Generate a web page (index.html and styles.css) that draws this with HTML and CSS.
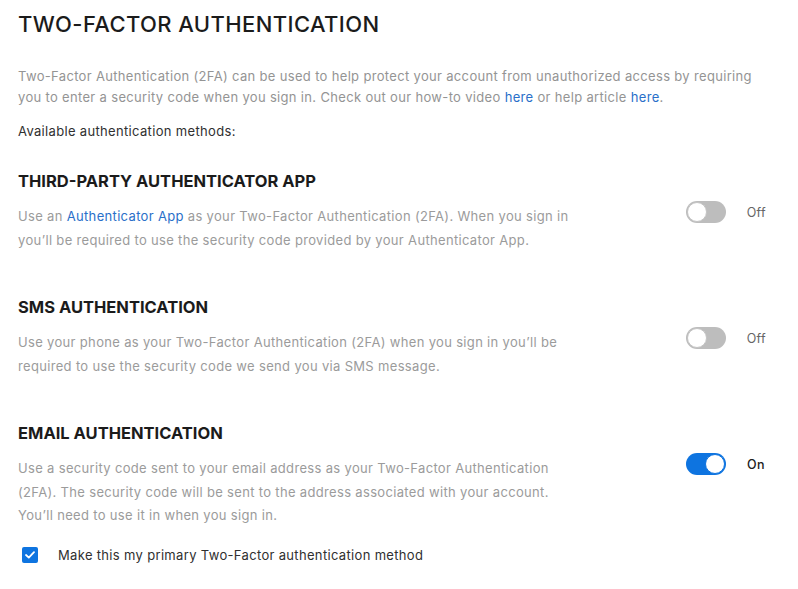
FILE: index.html
```html
<!DOCTYPE html>
<html lang="en">
<head>
    <meta charset="UTF-8">
    <meta name="viewport" content="width=device-width, initial-scale=1.0">
    <title>Two-Factor Authentication</title>
    <link rel="stylesheet" href="styles.css">
</head>
<body>
    <main class="page">
        <h1 class="page-title">TWO-FACTOR AUTHENTICATION</h1>
        <p class="intro">Two-Factor Authentication (2FA) can be used to help protect your account from unauthorized access by requiring you to enter a security code when you sign in. Check out our how-to video <a href="#">here</a> or help article <a href="#">here</a>.</p>
        <p class="available">Available authentication methods:</p>

        <section class="method">
            <h2>THIRD-PARTY AUTHENTICATOR APP</h2>
            <div class="method-row">
                <p class="method-desc">Use an <a href="#">Authenticator App</a> as your Two-Factor Authentication (2FA). When you sign in you’ll be required to use the security code provided by your Authenticator App.</p>
                <label class="switch">
                    <span class="track"><span class="knob"></span></span>
                    <span class="switch-label">Off</span>
                </label>
            </div>
        </section>

        <section class="method">
            <h2>SMS AUTHENTICATION</h2>
            <div class="method-row">
                <p class="method-desc">Use your phone as your Two-Factor Authentication (2FA) when you sign in you’ll be required to use the security code we send you via SMS message.</p>
                <label class="switch">
                    <span class="track"><span class="knob"></span></span>
                    <span class="switch-label">Off</span>
                </label>
            </div>
        </section>

        <section class="method">
            <h2>EMAIL AUTHENTICATION</h2>
            <div class="method-row">
                <p class="method-desc">Use a security code sent to your email address as your Two-Factor Authentication (2FA). The security code will be sent to the address associated with your account. You’ll need to use it in when you sign in.</p>
                <label class="switch on">
                    <span class="track"><span class="knob"></span></span>
                    <span class="switch-label">On</span>
                </label>
            </div>
            <label class="primary-check">
                <span class="checkbox">
                    <svg width="10" height="8" viewBox="0 0 10 8"><path d="M1 4l2.8 2.6L9 1.2" fill="none" stroke="#fff" stroke-width="1.8" stroke-linecap="round" stroke-linejoin="round"/></svg>
                </span>
                <span>Make this my primary Two-Factor authentication method</span>
            </label>
        </section>
    </main>
</body>
</html>
```

FILE: styles.css
```css
body {
    margin: 0;
    background-color: #fff;
    font-family: Inter, "Open Sans", Arial, sans-serif;
    color: #202020;
}

.page {
    padding: 9px 32px 0 18px;
}

a {
    color: #2a6fc9;
    text-decoration: none;
}

.page-title {
    margin: 0 0 27px;
    font-size: 22px;
    font-weight: 500;
    letter-spacing: 0.4px;
    line-height: 30px;
    color: #1b1b1b;
}

.intro {
    margin: 0 0 13px;
    font-size: 13px;
    line-height: 21px;
    letter-spacing: 0.33px;
    color: #949494;
}

.available {
    margin: 0 0 27px;
    font-size: 13px;
    line-height: 21px;
    letter-spacing: 0.33px;
    color: #303030;
}

.method {
    margin-bottom: 43px;
}

.method h2 {
    margin: 0 0 12px;
    font-size: 16.5px;
    font-weight: 700;
    line-height: 24px;
    color: #1b1b1b;
}

.method-row {
    display: flex;
    justify-content: space-between;
    align-items: flex-start;
}

.method-desc {
    margin: 0;
    width: 560px;
    font-size: 13px;
    line-height: 23.5px;
    letter-spacing: 0.33px;
    color: #9b9b9b;
}

.switch {
    display: flex;
    align-items: center;
    gap: 21px;
    margin-top: -4px;
    width: 80px;
}

.track {
    position: relative;
    width: 40px;
    height: 22px;
    border-radius: 11px;
    background-color: #bdbdbd;
}

.knob {
    position: absolute;
    top: 1px;
    left: 1px;
    width: 20px;
    height: 20px;
    border-radius: 50%;
    background-color: #fff;
    box-sizing: border-box;
    border: 1px solid #c4c4c4;
}

.switch.on .track {
    background-color: #0e74e0;
}

.switch.on .knob {
    left: auto;
    right: 1px;
    border-color: #0e74e0;
}

.switch-label {
    font-size: 12.5px;
    letter-spacing: 0.3px;
    color: #666;
}

.switch.on .switch-label {
    font-weight: 500;
    color: #202020;
}

.primary-check {
    display: flex;
    align-items: center;
    gap: 20px;
    margin-top: 19px;
    padding-left: 4px;
    font-size: 13px;
    letter-spacing: 0.33px;
    color: #303030;
}

.checkbox {
    display: flex;
    align-items: center;
    justify-content: center;
    width: 16px;
    height: 16px;
    border-radius: 2px;
    background-color: #0e74e0;
}
```
